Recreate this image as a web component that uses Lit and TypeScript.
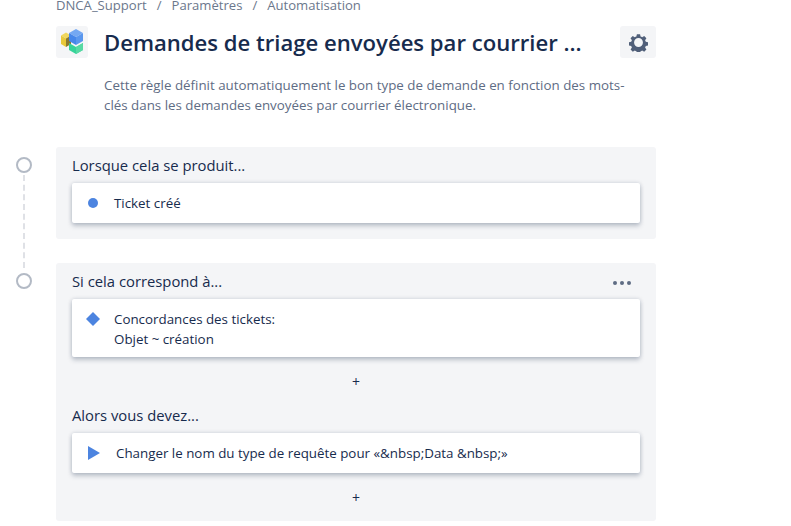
import { LitElement, html, css } from "lit";
import { customElement } from "lit/decorators.js";

@customElement("app-root")
export class AppRoot extends LitElement {
  static styles = css`
    :host {
      display: block;
      width: 791px;
      height: 526px;
      overflow: hidden;
      background: #fff;
      font-family: "Open Sans", "Noto Sans", sans-serif;
      color: #172b4d;
      font-size: 14px;
      line-height: 20px;
    }
    .page { width: 656px; }
    .crumbs {
      margin-left: 56px;
      height: 10px;
      line-height: 10px;
      display: flex;
      gap: 10px;
      color: #6b778c;
      font-size: 13.1px;
    }
    .head {
      margin: 16px 0 0 56px;
      display: flex;
      align-items: center;
      height: 32px;
    }
    .logo, .gear {
      width: 32px;
      height: 32px;
      border-radius: 3px;
      background: #f4f5f7;
      display: flex;
      align-items: center;
      justify-content: center;
      flex: none;
    }
    .gear { width: 36px; }
    h1 {
      margin: 0 0 0 16px;
      flex: 1;
      font-size: 22.1px;
      line-height: 32px;
      font-weight: 600;
      color: #172b4d;
      white-space: nowrap;
    }
    .desc {
      margin: 17px 0 0 104px;
      width: 530px;
      color: #5e6c84;
      font-size: 13.35px;
      line-height: 20px;
    }
    .flow { margin-top: 32px; }
    .row { display: flex; }
    .row.first { padding-bottom: 24px; }
    .rail {
      width: 56px;
      flex: none;
      display: flex;
      flex-direction: column;
      align-items: center;
      padding: 10px 8px 0 0;
      box-sizing: border-box;
      margin-bottom: -29px;
    }
    .row.last .rail { margin-bottom: 0; }
    .circle {
      width: 16px;
      height: 16px;
      box-sizing: border-box;
      border: 2px solid #b3bac5;
      border-radius: 50%;
      flex: none;
    }
    .dash {
      flex: 1;
      width: 0;
      margin-top: 2px;
      border-left: 2px dashed #dfe1e6;
    }
    .panel {
      flex: 1;
      background: #f4f5f7;
      border-radius: 3px;
      padding: 8px 16px 16px;
    }
    .label {
      height: 20px;
      font-size: 14.8px;
      line-height: 20px;
      display: flex;
      justify-content: space-between;
      align-items: center;
      margin-bottom: 8px;
    }
    .more { display: flex; gap: 3px; margin: 4px 9px 0 0; }
    .more i { width: 4px; height: 4px; border-radius: 50%; background: #5e6c84; display: block; }
    .card {
      background: #fff;
      border-radius: 2px;
      box-shadow: 0 3px 5px rgba(9, 30, 66, 0.22), 0 0 4px rgba(9, 30, 66, 0.16);
      padding: 10px 14px;
      display: flex;
      font-size: 13.35px;
      line-height: 20px;
    }
    .card.tall { padding-bottom: 8px; }
    .card svg { flex: none; margin-right: 14px; width: 14px; height: 20px; }
    .card svg.play { margin-right: 16px; }
    .plus {
      height: 20px;
      margin-top: 15px;
      text-align: center;
      font-size: 14px;
      line-height: 20px;
    }
    .gapafter { margin-bottom: 13px; }
    .plus.end { margin-bottom: -3px; }
  `;

  render() {
    return html`
      <div class="page">
        <div class="crumbs">
          <span>DNCA_Support</span><span>/</span><span>Paramètres</span><span>/</span><span>Automatisation</span>
        </div>
        <div class="head">
          <div class="logo">
            <svg width="32" height="32" viewBox="0 0 32 32">
              <path d="M5 9.5 L10 6.5 L15 9.5 L10 12.5 Z" fill="#f0d860" />
              <path d="M5 9.5 L10 12.5 L10 21 L5 18 Z" fill="#e8c93a" />
              <path d="M10 12.5 L15 9.5 L15 18 L10 21 Z" fill="#8a7a30" />
              <path d="M13 17 L20 21 L27 17 L27 24 L20 28 L13 24 Z" fill="#36d399" />
              <path d="M20 21 L27 17 L27 24 L20 28 Z" fill="#57d9a3" />
              <path d="M20 3 L27 7 L20 11 L13 7 Z" fill="#74a8f2" />
              <path d="M13 7 L20 11 L20 19 L13 15 Z" fill="#4687ea" />
              <path d="M20 11 L27 7 L27 15 L20 19 Z" fill="#5a97ee" />
            </svg>
          </div>
          <h1>Demandes de triage envoyées par courrier ...</h1>
          <div class="gear">
            <svg width="19" height="19" viewBox="0 0 24 24">
              <path fill="#505f79" fill-rule="evenodd" d="M10 1.5h4l.6 3a8 8 0 0 1 2 .9l2.6-1.7 2.8 2.8-1.7 2.6a8 8 0 0 1 .9 2l3 .6v4l-3 .6a8 8 0 0 1-.9 2l1.7 2.6-2.8 2.8-2.6-1.7a8 8 0 0 1-2 .9l-.6 2.6h-4l-.6-2.6a8 8 0 0 1-2-.9l-2.6 1.7-2.8-2.8 1.7-2.6a8 8 0 0 1-.9-2l-3-.6v-4l3-.6a8 8 0 0 1 .9-2L1.9 6.5l2.8-2.8 2.6 1.7a8 8 0 0 1 2-.9zM12 6.4a5.6 5.6 0 1 0 0 11.2 5.6 5.6 0 0 0 0-11.2z" />
            </svg>
          </div>
        </div>
        <div class="desc">Cette règle définit automatiquement le bon type de demande en fonction des mots-clés dans les demandes envoyées par courrier électronique.</div>
        <div class="flow">
          <div class="row first">
            <div class="rail"><div class="circle"></div><div class="dash"></div></div>
            <div class="panel">
              <div class="label">Lorsque cela se produit...</div>
              <div class="card">
                <svg viewBox="0 0 14 20"><circle cx="7" cy="10" r="5" fill="#4c84e0" /></svg>
                <span>Ticket créé</span>
              </div>
            </div>
          </div>
          <div class="row last">
            <div class="rail"><div class="circle"></div></div>
            <div class="panel">
              <div class="label">
                <span>Si cela correspond à...</span>
                <span class="more"><i></i><i></i><i></i></span>
              </div>
              <div class="card tall">
                <svg viewBox="0 0 14 20"><path d="M7 3 L14 10 L7 17 L0 10 Z" fill="#4c84e0" /></svg>
                <span>Concordances des tickets:<br />Objet ~ création</span>
              </div>
              <div class="plus gapafter">+</div>
              <div class="label">Alors vous devez...</div>
              <div class="card">
                <svg class="play" viewBox="0 0 14 20"><path d="M2 3 L14 10 L2 17 Z" fill="#4c84e0" /></svg>
                <span>Changer le nom du type de requête pour «&amp;nbsp;Data &amp;nbsp;»</span>
              </div>
              <div class="plus end">+</div>
            </div>
          </div>
        </div>
      </div>
    `;
  }
}
